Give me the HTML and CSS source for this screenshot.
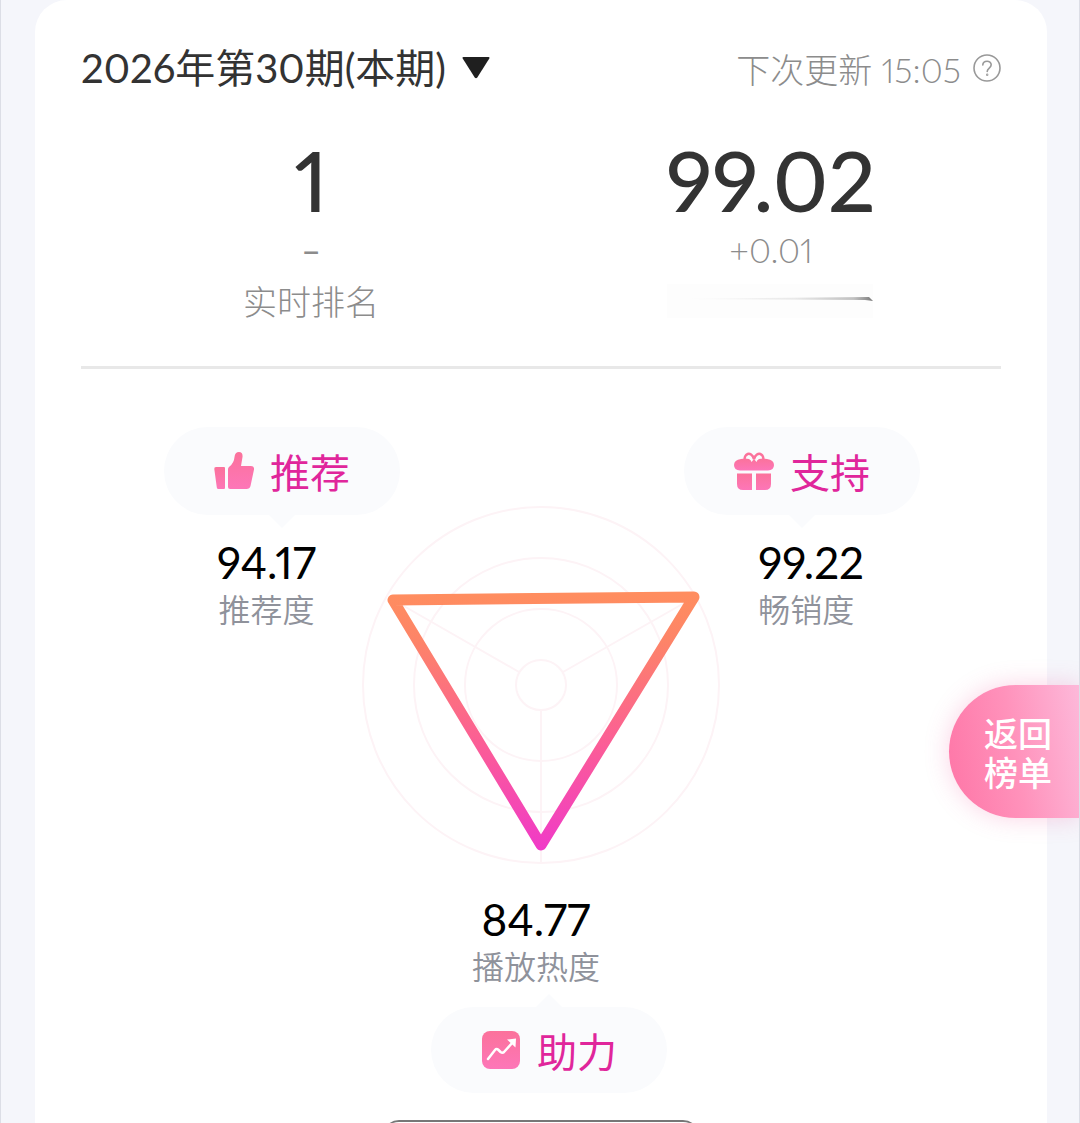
FILE: index.html
```
<!DOCTYPE html>
<html lang="zh-CN">
<head>
    <meta charset="UTF-8">
    <meta name="viewport" content="width=device-width, initial-scale=1.0">
    <title>榜单详情</title>
    <link rel="stylesheet" href="styles.css">
</head>
<body>
    <main class="card">
        <header class="card-header">
            <div class="period">
                <select class="period-select" aria-label="期数">
                    <option>2026年第30期(本期)</option>
                </select>
                <svg class="period-arrow" viewBox="0 0 28 22" aria-hidden="true">
                    <path d="M1.500 0h25q1.500 0 .8 1.400L15.300 20.500q-1.300 1.600-2.600 0L.7 1.400Q0 0 1.500 0z" fill="#1f1f1f"/>
                </svg>
            </div>
            <div class="update">
                <span>下次更新 15:05</span>
                <button class="help" type="button" aria-label="更新说明">
                    <svg viewBox="0 0 28 28" fill="none" stroke="#999" stroke-width="1.600" stroke-linecap="round">
                        <circle cx="14" cy="14" r="13"/>
                        <path d="M9.800 11c.2-5 8.400-5 8.400-.2 0 3.200-4 3.300-4 6.600"/>
                        <circle cx="14.200" cy="20.800" r=".4"/>
                    </svg>
                </button>
            </div>
        </header>

        <section class="stats">
            <div class="stat">
                <strong class="stat-value">1</strong>
                <span class="stat-change stat-flat">–</span>
                <span class="stat-label">实时排名</span>
            </div>
            <div class="stat">
                <strong class="stat-value">99.02</strong>
                <span class="stat-change">+0.01</span>
                <svg class="stat-mark" viewBox="0 0 208 36" aria-hidden="true">
                    <defs>
                        <linearGradient id="mark" x1="0" x2="1" y1="0" y2="0">
                            <stop offset="0" stop-color="#999" stop-opacity="0"/>
                            <stop offset=".6" stop-color="#999" stop-opacity=".2"/>
                            <stop offset=".9" stop-color="#999" stop-opacity=".6"/>
                            <stop offset="1" stop-color="#777"/>
                        </linearGradient>
                    </defs>
                    <rect y="2" width="206" height="34" fill="#fdfdfd"/>
                    <path d="M10 17L202 15l4 4-8-1z" fill="url(#mark)"/>
                </svg>
            </div>
        </section>

        <hr class="divider">

        <section class="radar">
            <svg class="radar-chart" viewBox="0 0 360 360" fill="none" role="img" aria-label="三项指标">
                <defs>
                    <linearGradient id="score" gradientUnits="userSpaceOnUse" x1="180" y1="90" x2="180" y2="345">
                        <stop offset="0" stop-color="#ff8d5f"/>
                        <stop offset=".18" stop-color="#fd8468"/>
                        <stop offset=".6" stop-color="#fb5c98"/>
                        <stop offset="1" stop-color="#f03ac8"/>
                    </linearGradient>
                </defs>
                <g stroke="#fdf3f6" stroke-width="2">
                    <circle cx="180" cy="180" r="178"/>
                    <circle cx="180" cy="180" r="127"/>
                    <circle cx="180" cy="180" r="76"/>
                    <circle cx="180" cy="180" r="25"/>
                    <path d="M158 167L34 96M202 167L332 93M180 205v153"/>
                </g>
                <path d="M32 95L333 92L180 340z" stroke="url(#score)" stroke-width="11" stroke-linejoin="round"/>
            </svg>

            <div class="metric metric-left">
                <button class="pill pill-down" type="button">
                    <svg class="pill-icon" viewBox="0 0 40 40" fill="url(#pink)" aria-hidden="true">
                        <defs>
                            <linearGradient id="pink" x1="0" x2="0" y1="0" y2="1">
                                <stop offset="0" stop-color="#fb729b"/>
                                <stop offset="1" stop-color="#fd76b8"/>
                            </linearGradient>
                        </defs>
                        <path d="M2 16h8q1 0 1 1v20q0 1-1 1H4.500Q3 38 2.800 36.500L.3 18Q0 16 2 16z"/>
                        <path d="M14 18q0-1.500 1.500-2.500Q20 12 20.500 6 21 1 25 1q4 0 3.500 5L27 15h10q3.500 0 3 3.500L36.500 35q-.7 3-4 3H16q-2 0-2-2z"/>
                    </svg>
                    <span>推荐</span>
                </button>
                <div class="score">
                    <b class="score-value">94.17</b>
                    <span class="score-label">推荐度</span>
                </div>
            </div>

            <div class="metric metric-right">
                <button class="pill pill-down" type="button">
                    <svg class="pill-icon" viewBox="0 0 40 40" fill="url(#pink)" aria-hidden="true">
                        <path d="M11 10C9 3 17-1 20 8M20 8C23-1 31 3 29 10" fill="none" stroke="#fb729b" stroke-width="2.500"/>
                        <path d="M7 8q4-1 8 0 2 1 2.500 3L20 8l2.500 3q.5-2 2.500-3 4-1 8 0 7 1 7 6t-6 5.500H6Q0 19 0 14t7-6z"/>
                        <path d="M3 22.500h15V39H9q-6 0-6-6zM22 22.500h15V33q0 6-6 6h-9z"/>
                    </svg>
                    <span>支持</span>
                </button>
                <div class="score score-right">
                    <b class="score-value">99.22</b>
                    <span class="score-label">畅销度</span>
                </div>
            </div>

            <div class="metric metric-bottom">
                <div class="score score-bottom">
                    <b class="score-value">84.77</b>
                    <span class="score-label">播放热度</span>
                </div>
                <button class="pill pill-up" type="button">
                    <svg class="pill-icon" viewBox="0 0 40 40" aria-hidden="true">
                        <rect x="1" y="1" width="38" height="38" rx="8" fill="url(#pink)"/>
                        <path d="M7 29l7-9q1.500-2 3.500 0l2 2q2 1.500 3.500 0L32 12" fill="none" stroke="#fff" stroke-width="2.500" stroke-linecap="round"/>
                        <path d="M26 9.500l9-1-.5 9z" fill="#fff"/>
                    </svg>
                    <span>助力</span>
                </button>
            </div>
        </section>

        <div class="drawer-edge"></div>
    </main>

    <a class="back" href="#">返回<br>榜单</a>
</body>
</html>
```
FILE: styles.css
```
* {
    box-sizing: border-box;
}
body {
    margin: 0;
    height: 100vh;
    padding: 0 32px 0 34px;
    background-color: #f5f6fb;
    border-left: 1px solid #dcdee6;
    border-right: 1px solid #dcdee6;
    font-family: Lato, "Noto Sans CJK SC", sans-serif;
    font-variant-numeric: proportional-nums;
    color: #333;
    position: relative;
    overflow: hidden;
}
button, select {
    font: inherit;
    color: inherit;
    border: none;
    background: none;
    padding: 0;
    cursor: pointer;
}
.card {
    min-height: 100vh;
    padding: 38px 46px 0;
    background-color: #fff;
    border-radius: 32px 32px 0 0;
}
.card-header {
    display: flex;
    justify-content: space-between;
    align-items: center;
    height: 60px;
}
.period {
    display: flex;
    align-items: center;
    gap: 16px;
}
.period-select {
    appearance: none;
    font-size: 40px;
    line-height: 60px;
}
.period-arrow {
    width: 28px;
    height: 22px;
}
.update {
    display: flex;
    align-items: center;
    gap: 12px;
    font-size: 34px;
    font-weight: 300;
    color: #8c8c8c;
}
.help {
    display: flex;
}
.help svg {
    width: 28px;
    height: 28px;
}

.stats {
    display: grid;
    grid-template-columns: 1fr 1fr;
    margin-top: 34px;
}
.stat {
    display: flex;
    flex-direction: column;
    align-items: center;
}
.stat-value {
    font-size: 84px;
    font-weight: 500;
    line-height: 96px;
}
.stat-change {
    font-size: 34px;
    font-weight: 300;
    line-height: 44px;
    color: #8c8c8c;
}
.stat-flat {
    font-weight: 500;
}
.stat-label {
    font-size: 34px;
    font-weight: 300;
    line-height: 60px;
    color: #8c8c8c;
}
.stat-mark {
    width: 208px;
    height: 36px;
    margin-top: 10px;
}
.divider {
    height: 3px;
    margin: 34px 0 58px;
    border: none;
    background-color: #e8e8e8;
}

/* the chart shares its row with the two upper metrics */
.radar {
    display: grid;
    grid-template-columns: 1fr 1fr;
}
.radar-chart {
    grid-area: 1 / 1 / 2 / 3;
    justify-self: center;
    width: 360px;
    height: 360px;
    margin-top: 78px;
}
.metric {
    display: flex;
    flex-direction: column;
}
.metric-left {
    grid-area: 1 / 1;
    align-items: flex-start;
    padding-left: 83px;
}
.metric-right {
    grid-area: 1 / 2;
    align-items: flex-end;
    padding-right: 81px;
}
.metric-bottom {
    grid-area: 2 / 1 / 3 / 3;
    align-items: center;
    margin-top: 30px;
}
.pill {
    position: relative;
    display: flex;
    justify-content: center;
    align-items: center;
    gap: 16px;
    width: 236px;
    height: 88px;
    border-radius: 44px;
    background-color: #fafbfd;
    color: #e0269b;
    font-size: 40px;
}
.pill::after {
    content: "";
    position: absolute;
    left: 50%;
    margin-left: -13px;
    border: 13px solid transparent;
}
.pill-down::after {
    top: 100%;
    border-top-color: #fafbfd;
    border-bottom: none;
}
.pill-up::after {
    bottom: 100%;
    border-bottom-color: #fafbfd;
    border-top: none;
}
.pill-up {
    height: 86px;
    margin: 16px 0 0 16px;
}
.pill-icon {
    width: 40px;
    height: 40px;
}
.score {
    display: flex;
    flex-direction: column;
    align-items: center;
    margin: 23px 0 0 53px;
}
.score-right {
    align-items: flex-start;
    margin: 23px 56px 0 0;
}
.score-bottom {
    margin: 0 10px 0 0;
}
.score-value {
    font-size: 44px;
    font-weight: 400;
    line-height: 48px;
    color: #000;
}
.score-label {
    font-size: 32px;
    font-weight: 350;
    line-height: 48px;
    color: #8f929b;
}

/* top edge of the panel below */
.drawer-edge {
    width: 316px;
    height: 16px;
    margin: 27px auto 0;
    border-top: 2px solid #777;
    border-radius: 16px 16px 0 0;
}
.back {
    position: absolute;
    top: 685px;
    right: -1px;
    width: 131px;
    padding: 29px 28px 26px 35px;
    border-radius: 67px 0 0 67px;
    background: linear-gradient(80deg, #fe75a6, #ff92bb 50%, #fdb9da);
    box-shadow: 0 0 24px rgba(240, 80, 150, 0.25);
    color: #fff;
    font-size: 34px;
    font-weight: 500;
    line-height: 39px;
    text-decoration: none;
}
```
